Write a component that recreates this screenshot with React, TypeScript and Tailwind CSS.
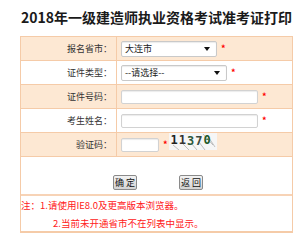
import React from "react";

const font = { fontFamily: '"Noto Sans CJK SC", "Noto Sans", sans-serif' };

function Star() {
  return <span className="ml-[4px] text-[9px] leading-none text-[#ff0000] font-bold">*</span>;
}

function Row({ label, bg, children }: { label: string; bg: boolean; children: React.ReactNode }) {
  return (
    <div className={`flex h-[24px] border-b border-[#f5cba8] ${bg ? "bg-[#fde8d3]" : "bg-white"}`}>
      <div className="w-[96px] shrink-0 border-r border-[#f5cba8] flex items-center justify-end pr-[4px] text-[9px] text-[#333]">
        {label}
      </div>
      <div className="flex items-center pl-[4px]">{children}</div>
    </div>
  );
}

function Select({ w, text }: { w: string; text: string }) {
  return (
    <div className={`${w} h-[16px] border border-[#c9c9c9] rounded-[2px] bg-white flex items-center justify-between pl-[3px] pr-[6px] text-[9px] text-[#222] shadow-[inset_0_1px_1px_rgba(0,0,0,0.08)]`}>
      <span className="leading-none">{text}</span>
      <svg width="6" height="4" viewBox="0 0 6 4"><path d="M0 0h6L3 4z" fill="#111" /></svg>
    </div>
  );
}

function Input({ w }: { w: string }) {
  return <div className={`${w} h-[14px] border border-[#d2d2d2] rounded-[2px] bg-white shadow-[inset_0_1px_1px_rgba(0,0,0,0.08)]`} />;
}

function Captcha() {
  return (
    <div className="relative ml-[1px] w-[48px] h-[17px] bg-[#f6f6f6] overflow-hidden mt-[-6px]">
      <svg className="absolute inset-0" width="48" height="17" viewBox="0 0 48 17">
        <path d="M4 12 L10 17 M14 11 L20 17 M22 10 L28 17 M30 9 L36 17 M38 2 L46 14 M34 1 L44 12" stroke="#999" strokeWidth="0.6" />
      </svg>
      <div className="absolute left-[2px] top-[0px] flex gap-[1px] text-[12px] font-bold leading-[15px]" style={{ fontFamily: '"DejaVu Sans Mono", monospace' }}>
        <span className="text-[#222]">1</span>
        <span className="text-[#333]">1</span>
        <span className="text-[#2d5a3d] mt-[1px]">3</span>
        <span className="text-[#3a4a40] mt-[1px]">7</span>
        <span className="text-[#1f5a2a]">0</span>
      </div>
    </div>
  );
}

function Btn({ text }: { text: string }) {
  return (
    <div className="w-[24px] h-[15px] border border-[#8a8a8a] rounded-[2px] bg-gradient-to-b from-[#f3f3f3] to-[#d3d3d3] text-[9px] leading-[13px] text-[#111] flex items-center justify-center whitespace-pre">
      {text}
    </div>
  );
}

export default function App() {
  return (
    <div className="w-[300px] h-[240px] bg-white" style={font}>
      <div className="w-[273px] ml-[20px]">
        <div className="h-[36px] flex items-center justify-center pb-[2px] text-[14px] font-bold text-[#1a1a1a] whitespace-nowrap">
          2018年一级建造师执业资格考试准考证打印
        </div>
        <div className="border border-[#f5cba8] border-b-[2px]">
          <Row label="报名省市：" bg>
            <Select w="w-[96px]" text="大连市" />
            <Star />
          </Row>
          <Row label="证件类型：" bg={false}>
            <Select w="w-[106px]" text="--请选择--" />
            <Star />
          </Row>
          <Row label="证件号码：" bg>
            <Input w="w-[137px]" />
            <Star />
          </Row>
          <Row label="考生姓名：" bg={false}>
            <Input w="w-[137px]" />
            <Star />
          </Row>
          <Row label="验证码：" bg>
            <Input w="w-[38px]" />
            <Star />
            <Captcha />
          </Row>
          <div className="h-[39px] border-b-[2px] border-[#f7d3b6] flex items-end pb-[4px] pl-[92px] gap-[42px]">
            <Btn text="确 定" />
            <Btn text="返 回" />
          </div>
          <div className="h-[35px] text-[9.5px] text-[#ff2020] leading-[18px] pt-[0px]">
            <div>注：1.请使用IE8.0及更高版本浏览器。</div>
            <div className="pl-[32px]">2.当前未开通省市不在列表中显示。</div>
          </div>
        </div>
      </div>
    </div>
  );
}
